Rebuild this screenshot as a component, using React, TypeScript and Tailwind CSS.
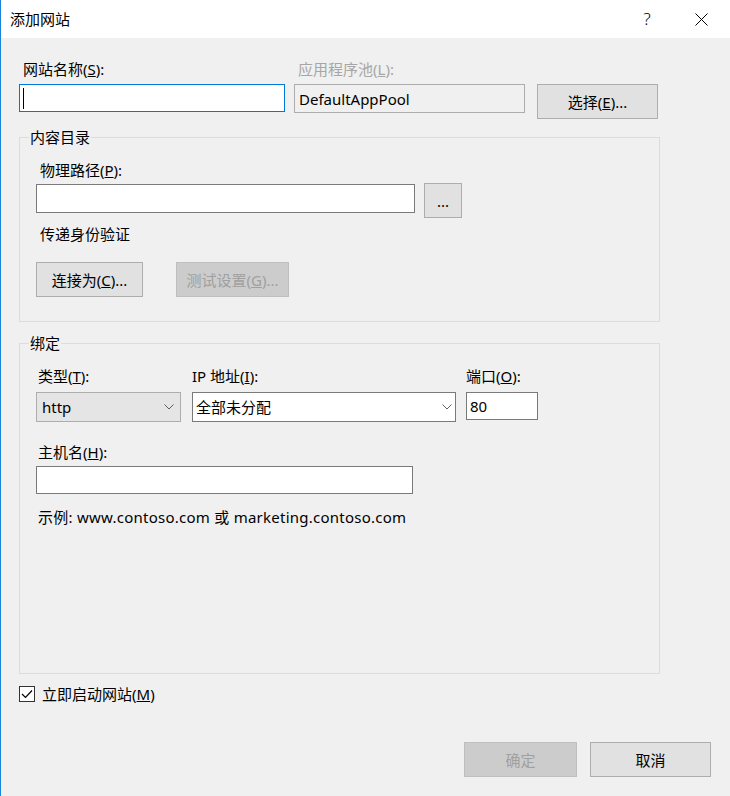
import React from "react";

const Chevron: React.FC = () => (
  <svg width="10" height="6" viewBox="0 0 10 6" className="shrink-0">
    <path d="M0.5 0.5 L5 5 L9.5 0.5" fill="none" stroke="#606060" strokeWidth="1" />
  </svg>
);

const Button: React.FC<{ className?: string; disabled?: boolean; children: React.ReactNode }> = ({
  className = "",
  disabled,
  children,
}) => (
  <div
    className={`flex items-center justify-center h-[35px] border ${
      disabled ? "bg-[#cccccc] border-[#bfbfbf] text-[#a0a0a0]" : "bg-[#e1e1e1] border-[#adadad] text-black"
    } ${className}`}
  >
    {children}
  </div>
);

const Legend: React.FC<{ children: React.ReactNode }> = ({ children }) => (
  <span className="absolute left-[9px] top-[-11px] px-[1px] bg-[#f0f0f0] leading-[20px]">{children}</span>
);

export default function App() {
  return (
    <div className="w-[730px] h-[796px] bg-[#f0f0f0] border-l border-[#1883d7] text-[15px] leading-[20px] text-black font-['Noto_Sans','Noto_Sans_CJK_SC',sans-serif] select-none overflow-hidden">
      {/* title bar */}
      <div className="h-[38px] bg-white flex items-center pl-[9px]">
        <span>添加网站</span>
        <div className="ml-auto flex items-center mr-[2px]">
          <div className="w-[54px] flex justify-center text-[17px] font-light">?</div>
          <div className="w-[54px] flex justify-center items-center">
            <svg width="13" height="13" viewBox="0 0 13 13">
              <path d="M0.5 0.5 L12.5 12.5 M12.5 0.5 L0.5 12.5" stroke="#000" strokeWidth="1" />
            </svg>
          </div>
        </div>
      </div>

      {/* site name / app pool */}
      <div className="flex mt-[21px] pl-[18px]">
        <div className="w-[266px]">
          <div className="h-[20px] pl-[4px]">
            网站名称(<u>S</u>):
          </div>
          <div className="mt-[5px] h-[28px] border border-[#0078d7] bg-white flex items-center pl-[3px]">
            <div className="w-px h-[21px] bg-black" />
          </div>
        </div>
        <div className="ml-[9px] w-[231px]">
          <div className="h-[20px] pl-[4px] text-[#a6a6a6]">
            应用程序池(<u>L</u>):
          </div>
          <div className="mt-[5px] h-[29px] border border-[#adadad] bg-[#f0f0f0] flex items-center pl-[4px]">
            DefaultAppPool
          </div>
        </div>
        <Button className="ml-[12px] mt-[25px] w-[121px]">
          选择(<u>E</u>)...
        </Button>
      </div>

      {/* content directory */}
      <div className="relative mt-[18px] ml-[18px] w-[641px] h-[185px] border border-[#dcdcdc] pt-[22px] pl-[16px]">
        <Legend>内容目录</Legend>
        <div className="h-[20px] pl-[4px]">
          物理路径(<u>P</u>):
        </div>
        <div className="flex items-start">
          <div className="mt-[4px] w-[379px] h-[29px] border border-[#7a7a7a] bg-white" />
          <Button className="ml-[9px] mt-[3px] w-[38px]">...</Button>
        </div>
        <div className="mt-[6px] h-[20px] pl-[4px]">传递身份验证</div>
        <div className="flex mt-[18px]">
          <Button className="w-[107px]">
            连接为(<u>C</u>)...
          </Button>
          <Button disabled className="ml-[33px] w-[113px]">
            测试设置(<u>G</u>)...
          </Button>
        </div>
      </div>

      {/* binding */}
      <div className="relative mt-[21px] ml-[18px] w-[641px] h-[331px] border border-[#dcdcdc] pt-[22px] pl-[16px]">
        <Legend>绑定</Legend>
        <div className="flex">
          <div className="w-[145px]">
            <div className="h-[20px] pl-[2px]">
              类型(<u>T</u>):
            </div>
            <div className="mt-[6px] h-[30px] border border-[#adadad] bg-[#e5e5e5] flex items-center pl-[5px] pr-[6px]">
              <span className="flex-1">http</span>
              <Chevron />
            </div>
          </div>
          <div className="ml-[11px] w-[264px]">
            <div className="h-[20px]">
              IP 地址(<u>I</u>):
            </div>
            <div className="mt-[6px] h-[30px] border border-[#7a7a7a] bg-white flex items-center pl-[3px] pr-[3px]">
              <span className="flex-1">全部未分配</span>
              <Chevron />
            </div>
          </div>
          <div className="ml-[10px] w-[72px]">
            <div className="h-[20px]">
              端口(<u>O</u>):
            </div>
            <div className="mt-[6px] h-[28px] border border-[#7a7a7a] bg-white flex items-center pl-[3px]">80</div>
          </div>
        </div>
        <div className="mt-[20px] h-[20px] pl-[2px]">
          主机名(<u>H</u>):
        </div>
        <div className="mt-[4px] w-[377px] h-[28px] border border-[#7a7a7a] bg-white" />
        <div className="mt-[13px] h-[20px] pl-[2px] tracking-[0.25px]">
          示例: www.contoso.com 或 marketing.contoso.com
        </div>
      </div>

      {/* start checkbox */}
      <div className="flex items-center h-[20px] mt-[10px] ml-[18px]">
        <div className="w-[16px] h-[16px] border border-[#333333] bg-white flex items-center justify-center">
          <svg width="12" height="10" viewBox="0 0 12 10">
            <path d="M1 5 L4.5 8.5 L11 1.5" fill="none" stroke="#000" strokeWidth="1.2" />
          </svg>
        </div>
        <span className="ml-[7px]">
          立即启动网站(<u>M</u>)
        </span>
      </div>

      {/* footer buttons */}
      <div className="flex justify-end mt-[38px] pr-[19px] gap-[13px]">
        <Button disabled className="w-[113px]">
          确定
        </Button>
        <Button className="w-[121px]">取消</Button>
      </div>
    </div>
  );
}
